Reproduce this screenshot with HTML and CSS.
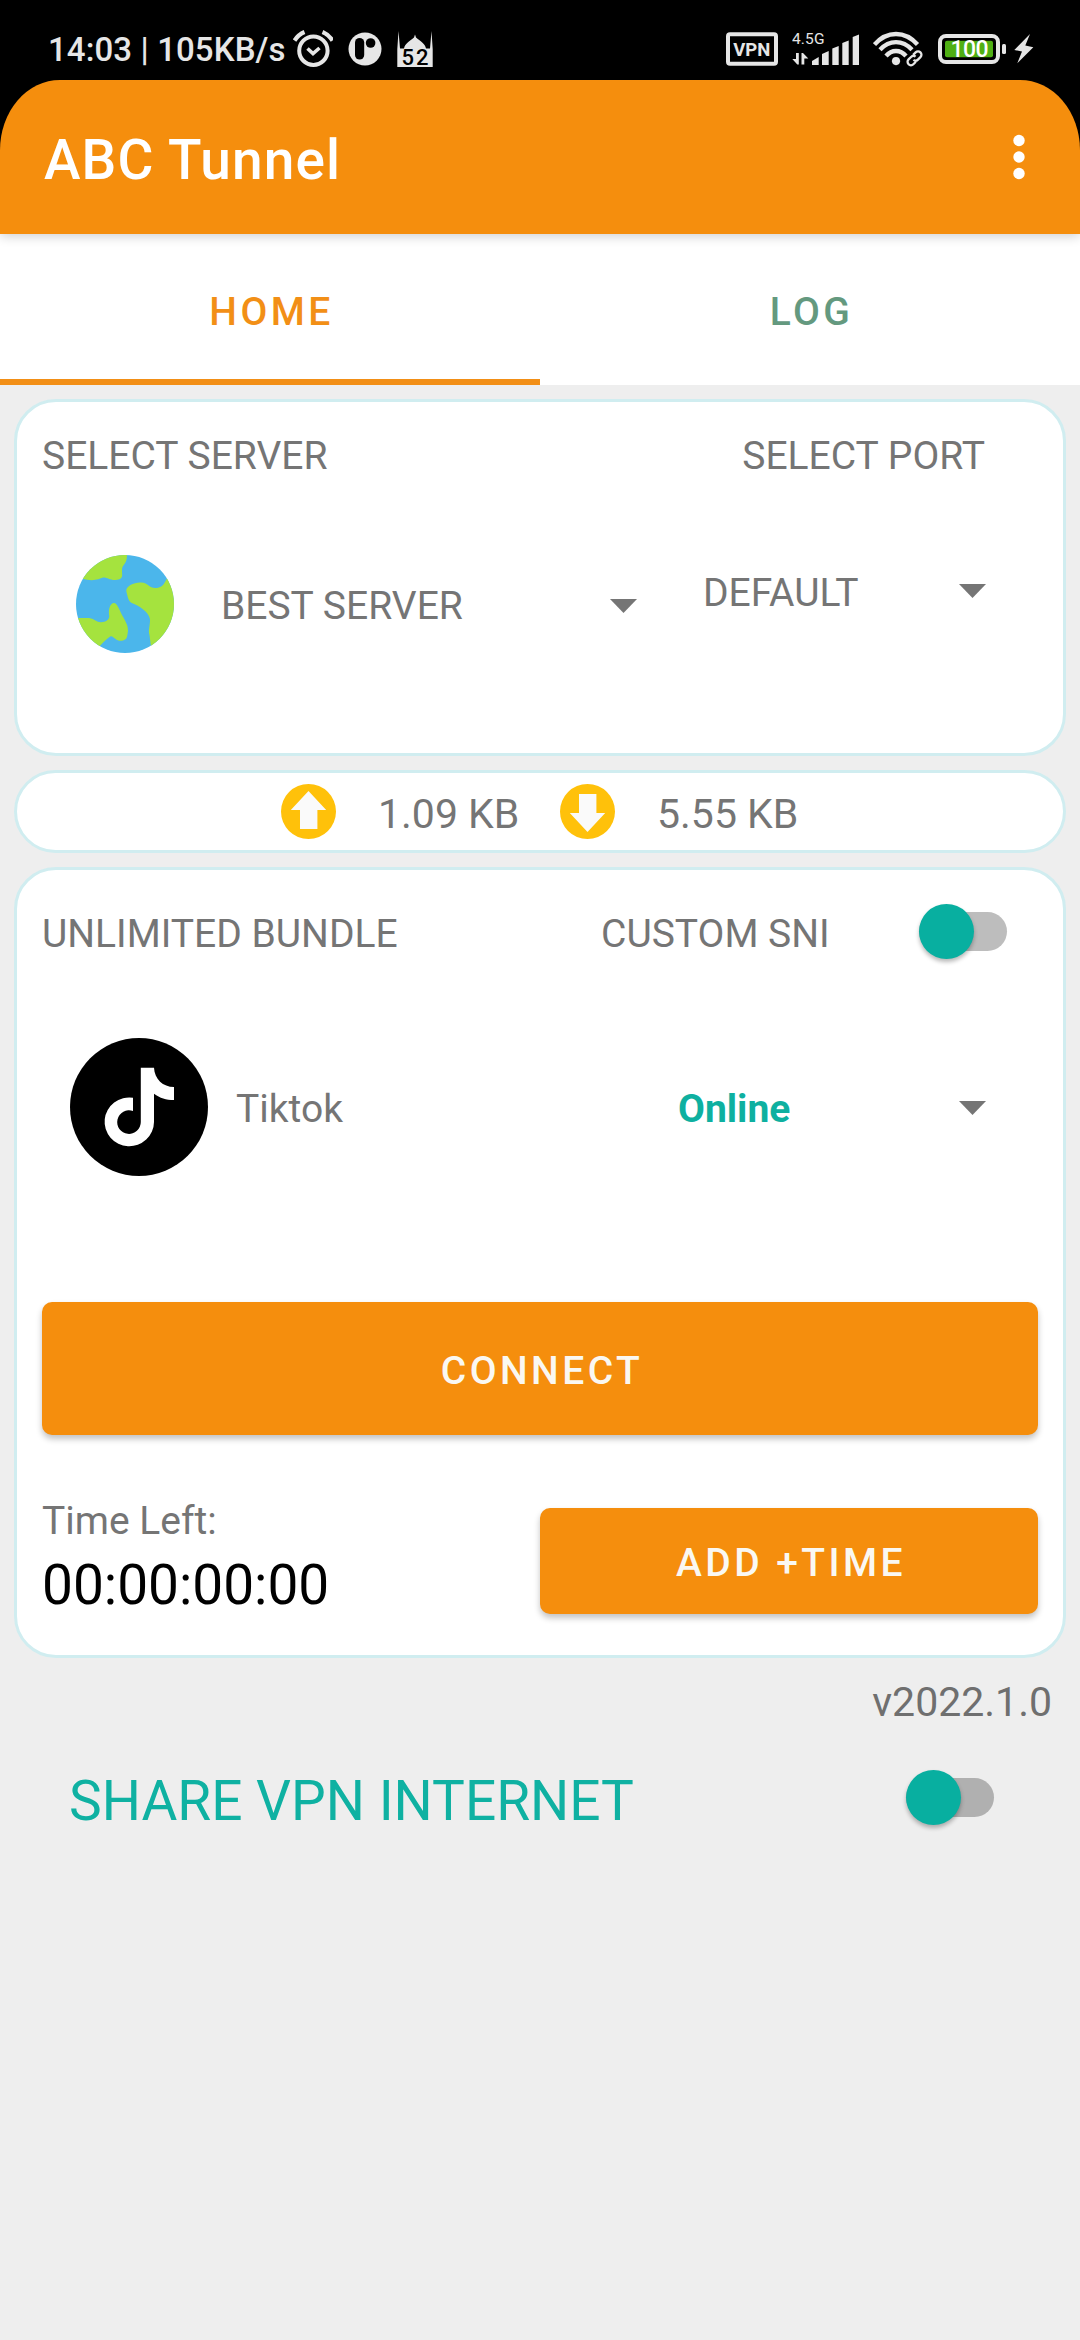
FILE: index.html
```html
<!DOCTYPE html>
<html lang="en">
<head>
<meta charset="utf-8">
<title>ABC Tunnel</title>
<link rel="stylesheet" href="styles.css">
</head>
<body>
<div class="status">
  <span class="status-time">14:03 | 105KB/s</span>
  <svg class="ic-alarm" width="40" height="38" viewBox="293 30 40 38" fill="none" stroke="#e6e6e6" stroke-width="4"><circle cx="313.4" cy="50.7" r="14.2"/><path d="M307.5 48.5l5.5 5 6.5-5.5" stroke-width="3.6"/><path d="M294.5 40.5q4-6 10-8.500M332.500 40.500q-4-6-10-8.500" stroke-width="4.200"/></svg>
  <svg class="ic-p" width="34" height="36" viewBox="348 31 34 36"><circle cx="365" cy="49" r="16.500" fill="#e6e6e6"/><rect x="355" y="38" width="9.200" height="21.500" rx="4.600"/><circle cx="370.600" cy="43" r="4.800"/></svg>
  <svg class="ic-mosque" width="36" height="37" viewBox="397 31 36 37"><path fill="#e6e6e6" d="M398.500 31l1.500 17.500h4c1-5 5-7 10-11l1-3 1 3c5 4 9 6 10 11h4l1.500-17.500 1.200 18v18h-35.400v-18z"/><text x="401.500" y="64.500" class="mosque-num" textLength="27">52</text></svg>
  <div class="status-right">
    <svg width="52" height="34" viewBox="726 32 52 34"><rect x="728" y="34.200" width="48" height="29.600" rx="2" fill="none" stroke="#e6e6e6" stroke-width="4"/><text x="733.300" y="55.500" class="vpn-txt" textLength="37">VPN</text></svg>
    <svg class="ic-signal" width="67" height="36" viewBox="792 31 67 36"><text x="792" y="44" class="net-txt" textLength="32.500">4.5G</text><g fill="#e6e6e6"><path d="M812 65v-4l6.700-4v8zM822 65V54l6.700-3v14zM832.300 65V48.500l6.400-2.500v19zM842.300 65V43l6.400-2.500V65zM852.700 65V37l6.300-2.500V65z"/><path d="M796 53h2.800v11.500h-1.500l-5-5.500h3.700zM801.500 64.500h2.800v-6h4l-5.300-5.500h-1.500z"/></g></svg>
    <svg class="ic-wifi" width="50" height="36" viewBox="873 32 50 36" fill="none" stroke="#e6e6e6" stroke-width="4.300"><path d="M874.500 45.500q9.500-10.500 21.500-10.500t21.500 10.500M880 50.800q7-7.600 16-7.600t16 7.600M886 57q4.300-5 10-5t10 5"/><path d="M891.500 62q4.500-4 9 0l-4.500 4.500z" fill="#e6e6e6" stroke="none"/><circle cx="896" cy="62" r="4" fill="#e6e6e6" stroke="none"/><g transform="rotate(-45 914.500 59.300)" stroke="#000" stroke-width="5"><rect x="905.500" y="55.500" width="10" height="7.500" rx="3.700"/><rect x="913.500" y="55.500" width="10" height="7.500" rx="3.700"/></g><g transform="rotate(-45 914.500 59.300)" stroke-width="2.300"><path d="M913 62.700h-3.500a3.400 3.400 0 0 1 0-6.800h3.500q3 0 3.400 3M916 55.900h3.500a3.400 3.400 0 0 1 0 6.800h-3.500q-3 0-3.400-3"/></g></svg>
    <svg class="ic-battery" width="68" height="32" viewBox="938 33 68 32"><rect x="940" y="36" width="58" height="26" rx="6" fill="none" stroke="#e6e6e6" stroke-width="4"/><rect x="945" y="40.700" width="48" height="16.500" rx="2" fill="#4faf13"/><rect x="1002" y="44" width="4" height="10" rx="1.500" fill="#e6e6e6"/><text x="950.500" y="57.300" class="bat-txt" textLength="38">100</text></svg>
    <svg class="ic-bolt" width="20" height="30" viewBox="1014 35 20 30"><path fill="#e6e6e6" d="M1030 35l-15.700 16 7.700 1.500-4.700 11.800 16-16-8-1.800z"/></svg>
  </div>
</div>
<header class="appbar">
  <h1 class="title">ABC Tunnel</h1>
  <svg class="menu" width="12" height="46" viewBox="0 0 12 46" fill="#fff"><circle cx="6" cy="6.500" r="5.700"/><circle cx="6" cy="23" r="5.700"/><circle cx="6" cy="39.500" r="5.700"/></svg>
</header>
<nav class="tabs">
  <a class="tab tab-active">HOME</a>
  <a class="tab">LOG</a>
</nav>
<main class="main">
  <section class="card server-card">
    <div class="row head-row"><span>SELECT SERVER</span><span class="port-label">SELECT PORT</span></div>
    <div class="row server-row">
      <svg class="globe" width="98" height="98" viewBox="0 0 98 98"><defs><clipPath id="g"><circle cx="49" cy="49" r="49"/></clipPath></defs><g clip-path="url(#g)"><rect width="98" height="98" fill="#4bb6eb"/><g fill="#a5e33e"><path d="M51 0C51 10 46 9 46 15C46 21 47 22 44 24C35 27 32 22 27 22.500C23 24 17 27 6 23.500L0 0z"/><path d="M92 22C88 28 88 31 83 32.500C73 35 74 28 65 27.500C59 27 49 31 50.400 36.700C52 42 52 47 57 48.500C68 53 74 60 74 65C74 71 72 76 73.500 80L75 92L98 98V22z"/><path d="M0 63H13C19 64 20 67 25 67.300C30 67 33 65 33.300 61C32 55 34 48 38 48C41 48 43 54 46 60C51 69 52 71 52 76C51 83 51 84 47 85.500C41 87 39 83 35.500 81.300C33 81 27 88 22 93L0 98z"/></g></g></svg>
      <span class="server-name">BEST SERVER</span>
      <svg class="caret" width="27" height="14" viewBox="0 0 27 14"><path d="M0 0h27L13.500 14z"/></svg>
      <div class="port"><span>DEFAULT</span><svg class="caret" width="27" height="14" viewBox="0 0 27 14"><path d="M0 0h27L13.500 14z"/></svg></div>
    </div>
  </section>
  <section class="card stats-card">
    <svg width="55" height="55" viewBox="0 0 55 55"><circle cx="27.500" cy="27.500" r="27.500" fill="#ffc10a"/><path fill="#fafafa" d="M27.500 7l17.700 19h-8.800v19H19V26H9.800z"/></svg>
    <span class="stat up">1.09 KB</span>
    <svg width="55" height="55" viewBox="0 0 55 55"><circle cx="27.500" cy="27.500" r="27.500" fill="#ffc10a"/><path fill="#fafafa" d="M27.500 48l17.700-19h-8.800V10H19v19H9.800z"/></svg>
    <span class="stat down">5.55 KB</span>
  </section>
  <section class="card bundle-card">
    <div class="row bundle-head"><span>UNLIMITED BUNDLE</span><span class="sni">CUSTOM SNI</span><div class="switch"><i class="thumb"></i></div></div>
    <div class="row bundle-row">
      <svg class="tiktok" width="138" height="138" viewBox="0 0 138 138"><circle cx="69" cy="69" r="69"/><path fill="#fff" d="M70.800 29.700H84C84.500 41 93 49 104 49V62C96 62 90 60 84 55.700V84A24.700 24.400 0 1 1 63 59.700V73A11.800 11.800 0 1 0 70.800 84z"/></svg>
      <span class="bundle-name">Tiktok</span>
      <span class="online">Online</span>
      <svg class="caret" width="27" height="14" viewBox="0 0 27 14"><path d="M0 0h27L13.500 14z"/></svg>
    </div>
    <button class="btn connect">CONNECT</button>
    <div class="row time-row">
      <div class="time"><div class="time-label">Time Left:</div><div class="timer">00:00:00:00</div></div>
      <button class="btn add">ADD +TIME</button>
    </div>
  </section>
  <div class="version">v2022.1.0</div>
  <div class="share"><span>SHARE VPN INTERNET</span><div class="switch switch-dark"><i class="thumb"></i></div></div>
</main>
</body>
</html>
```
FILE: styles.css
```css
* { box-sizing: border-box; }
body { margin: 0; width: 1080px; height: 2340px; background: #eee; font-family: Roboto, "Liberation Sans", sans-serif; color: #757575; font-size: 39px; line-height: 52px; white-space: nowrap; overflow: hidden; }
svg { display: block; flex: none; }

/* The black strip continues behind the rounded corners of the app bar */
.status { height: 150px; margin-bottom: -70px; background: #000; display: flex; align-items: center; padding: 18px 46px 70px 48px; color: #e6e6e6; }
.status-time { font-size: 33px; line-height: 40px; font-weight: 500; letter-spacing: .1px; width: 245px; padding-top: 2px; }
.ic-p { margin-left: 15px; }
.ic-mosque { margin-left: 15px; overflow: visible; }
.status-right { margin-left: auto; display: flex; align-items: center; }
.ic-signal, .ic-wifi { margin-left: 14px; }
.ic-battery { margin-left: 15px; }
.ic-bolt { margin-left: 8px; }
.mosque-num { font-size: 22px; font-weight: 500; }
.vpn-txt { font-size: 18.5px; font-weight: 700; fill: #e6e6e6; }
.net-txt { font-size: 15.5px; fill: #e6e6e6; }
.bat-txt { font-size: 23px; font-weight: 500; fill: #fff; }

.appbar { height: 154px; background: #f58e0d; border-radius: 60px 60px 0 0 / 70px 70px 0 0; display: flex; justify-content: space-between; align-items: center; padding: 0 55px 0 44px; position: relative; box-shadow: 0 2px 12px rgba(0,0,0,.2); }
.title { margin: 6px 0 0; font-size: 55px; line-height: 64px; font-weight: 500; color: #fff; letter-spacing: 1.1px; }

.tabs { height: 151px; background: #fff; display: flex; }
.tab { flex: 1; text-align: center; font-weight: 500; letter-spacing: 3.44px; color: #64997f; padding: 52px 0 0 3px; }
.tab-active { color: #f28f16; border-bottom: 6px solid #f28f16; }

.main { padding: 14px 14px 0; }
.card { background: #fff; border: 3px solid #d0edf0; border-radius: 42px; margin-bottom: 14px; }
.row { display: flex; }
.server-card { height: 357px; padding: 28px 25px 0; }
.head-row { justify-content: space-between; padding-right: 53px; }
.server-row { height: 98px; margin-top: 73px; padding-left: 34px; align-items: center; }
.server-name { margin-left: 47px; width: 389px; padding-top: 4px; }
.caret { fill: #757575; }
.server-row > .caret { margin-top: 3px; }
.port { display: flex; align-items: center; margin: -23px 0 0 66px; width: 283px; justify-content: space-between; }
.port .caret { margin-top: -3px; }

.stats-card { height: 83px; display: flex; align-items: center; padding-left: 264px; font-size: 41px; }
.stat { padding-top: 4px; }
.up { margin-left: 42px; width: 182px; }
.down { margin-left: 42px; }

.bundle-card { height: 791px; padding: 34px 25px 0; }
.bundle-head { height: 56px; align-items: center; padding-top: 3px; }
.sni { margin-left: auto; width: 318px; }
.switch { position: relative; width: 88px; height: 39px; border-radius: 20px; background: #bdbdbd; margin-right: 31px; margin-top: -4px; }
.switch-dark { background: #b0b0b0; }
.thumb { position: absolute; left: 0; top: -8px; width: 55px; height: 55px; border-radius: 50%; background: #08afa0; box-shadow: 0 3px 4px rgba(0,0,0,.28); }
.bundle-row { margin-top: 78px; padding-left: 28px; height: 138px; align-items: center; }
.bundle-row > .caret { margin-top: 2px; }
.bundle-name { margin-left: 28px; width: 442px; padding-top: 4px; }
.online { color: #0eb0a0; font-weight: 700; width: 281px; padding-top: 4px; }
.btn { display: block; border: 0; border-radius: 10px; padding: 4px 0 0 4px; background: #f58e0d; color: #faf8f2; font: 500 39px/52px Roboto, "Liberation Sans", sans-serif; letter-spacing: 3.44px; box-shadow: 0 4px 6px rgba(0,0,0,.24); }
.connect { width: 996px; height: 133px; margin-top: 126px; }
.time-row { margin-top: 60px; justify-content: space-between; }
.timer { font-size: 55px; line-height: 64px; color: #000; margin-top: 6px; }
.add { width: 498px; height: 106px; margin-top: 13px; }

.version { font-size: 41px; line-height: 52px; text-align: right; padding-right: 14px; margin-top: 18px; color: #6f6f6f; }
.share { display: flex; align-items: center; justify-content: space-between; font-size: 55px; line-height: 64px; color: #0fb1a2; padding: 0 41px 0 55px; margin-top: 41px; }
.share .switch { margin: -8px 31px 0 0; }
```
